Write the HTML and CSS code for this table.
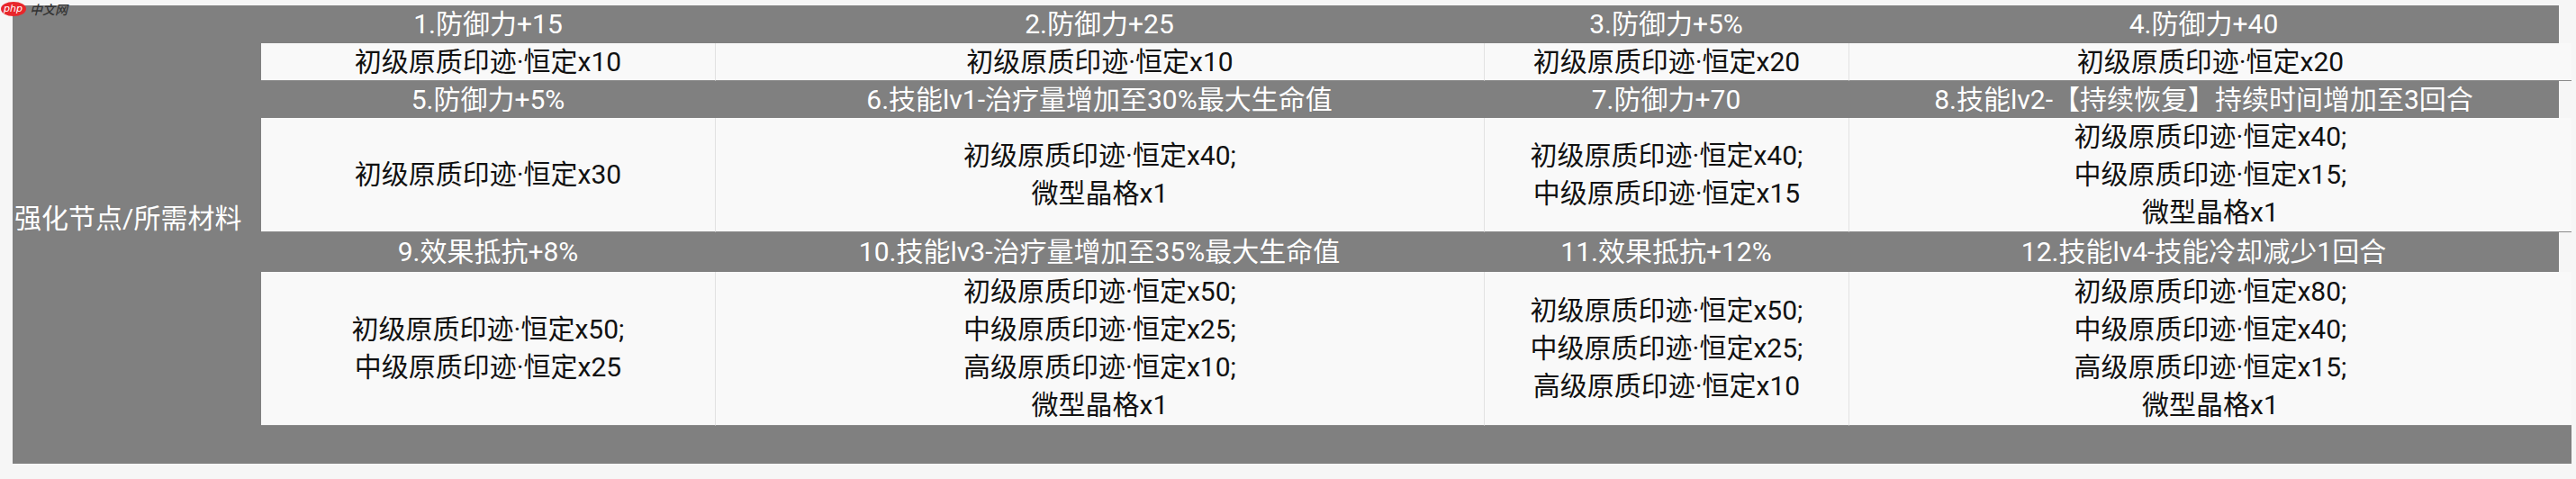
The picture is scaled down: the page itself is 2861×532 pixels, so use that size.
FILE: index.html
```html
<!DOCTYPE html>
<html lang="zh-CN">
<head>
<meta charset="utf-8">
<title>强化节点</title>
<link rel="stylesheet" href="styles.css">
</head>
<body>
<div class="logo">
  <span class="logo-php">php</span><span class="logo-cn">中文网</span>
</div>
<div class="sheet">
  <div class="label">强化节点/所需材料</div>

  <div class="head">1.防御力+15</div>
  <div class="head">2.防御力+25</div>
  <div class="head">3.防御力+5%</div>
  <div class="head last">4.防御力+40</div>

  <div class="cell first">初级原质印迹·恒定x10</div>
  <div class="cell">初级原质印迹·恒定x10</div>
  <div class="cell">初级原质印迹·恒定x20</div>
  <div class="cell">初级原质印迹·恒定x20</div>

  <div class="head">5.防御力+5%</div>
  <div class="head">6.技能lv1-治疗量增加至30%最大生命值</div>
  <div class="head">7.防御力+70</div>
  <div class="head last">8.技能lv2-【持续恢复】持续时间增加至3回合</div>

  <div class="cell first">初级原质印迹·恒定x30</div>
  <div class="cell">初级原质印迹·恒定x40;<br>微型晶格x1</div>
  <div class="cell">初级原质印迹·恒定x40;<br>中级原质印迹·恒定x15</div>
  <div class="cell">初级原质印迹·恒定x40;<br>中级原质印迹·恒定x15;<br>微型晶格x1</div>

  <div class="head">9.效果抵抗+8%</div>
  <div class="head">10.技能lv3-治疗量增加至35%最大生命值</div>
  <div class="head">11.效果抵抗+12%</div>
  <div class="head last">12.技能lv4-技能冷却减少1回合</div>

  <div class="cell first">初级原质印迹·恒定x50;<br>中级原质印迹·恒定x25</div>
  <div class="cell">初级原质印迹·恒定x50;<br>中级原质印迹·恒定x25;<br>高级原质印迹·恒定x10;<br>微型晶格x1</div>
  <div class="cell">初级原质印迹·恒定x50;<br>中级原质印迹·恒定x25;<br>高级原质印迹·恒定x10</div>
  <div class="cell">初级原质印迹·恒定x80;<br>中级原质印迹·恒定x40;<br>高级原质印迹·恒定x15;<br>微型晶格x1</div>

  <div class="foot"></div>
</div>
</body>
</html>
```

FILE: styles.css
```css
html, body {
  margin: 0;
  padding: 0;
}

body {
  width: 2861px;
  height: 532px;
  background-color: #f6f6f6;
  font-family: Roboto, "Noto Sans CJK SC", sans-serif;
  position: relative;
  overflow: hidden;
}

.sheet {
  display: grid;
  grid-template-columns: 276px 504px 854px 405px 803px;
  grid-template-rows: 42px 42px 41px 127px 44px 171px 42px;
  margin: 6px 0 0 14px;
  width: 2842px;
  font-size: 30px;
}

.label {
  grid-row: 1 / 7;
  grid-column: 1;
  background: #808080;
  color: #ffffff;
  display: flex;
  align-items: center;
  padding-left: 2px;
  white-space: nowrap;
}

.head {
  background: #808080;
  color: #ffffff;
  display: flex;
  align-items: center;
  justify-content: center;
  white-space: nowrap;
  line-height: 42px;
}

.head.last {
  margin-right: 14px;
}

.cell {
  background: #f9f9f9;
  color: #111111;
  display: flex;
  align-items: center;
  justify-content: center;
  text-align: center;
  line-height: 42px;
  white-space: nowrap;
  border-left: 1px solid #e2e2e2;
  border-bottom: 1px solid #8a8a8a;
}

.cell.first {
  border-left: none;
}

.foot {
  grid-column: 1 / 6;
  background: #808080;
}

.logo {
  position: absolute;
  left: 1px;
  top: 2px;
  display: flex;
  align-items: center;
  z-index: 2;
}

.logo-php {
  background: #e8262b;
  color: #ffffff;
  font-family: "DejaVu Sans", sans-serif;
  font-style: italic;
  font-size: 11px;
  line-height: 14px;
  border-radius: 50%;
  padding: 1px 4px 1px 3px;
}

.logo-cn {
  color: #333333;
  font-family: "Noto Sans CJK SC", sans-serif;
  font-style: italic;
  font-size: 14px;
  line-height: 14px;
  margin-left: 4px;
  font-weight: 500;
}
```
